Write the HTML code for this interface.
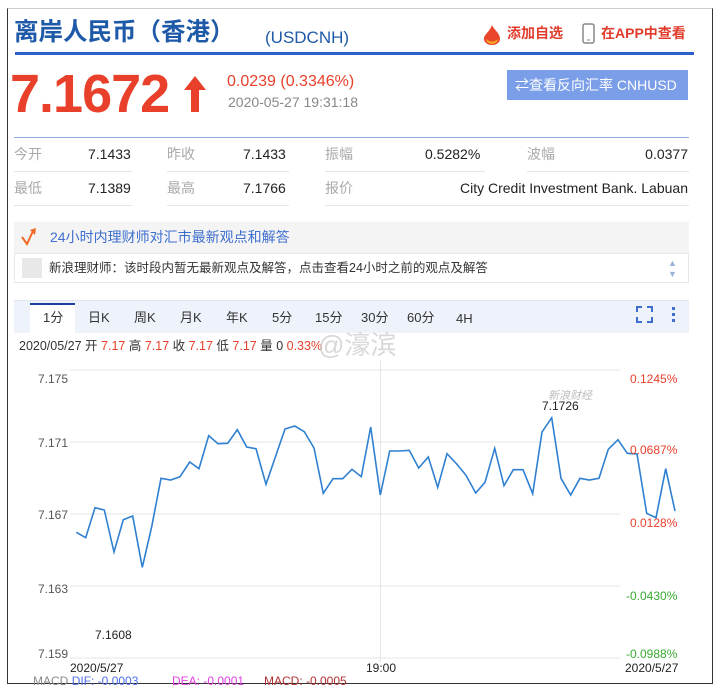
<!DOCTYPE html>
<html><head><meta charset="utf-8"><style>
*{margin:0;padding:0;box-sizing:border-box}
body{width:720px;height:694px;background:#fff;position:relative;overflow:hidden;font-family:"Liberation Sans","Noto Sans CJK SC",sans-serif}
.a{position:absolute;white-space:nowrap;line-height:1.2}
.t{top:310px;font-size:13px;color:#333;line-height:16px;height:16px}
</style></head><body>
<div class="a" style="left:7px;top:8px;width:706px;height:676px;border:1px solid #333;border-top-color:#ccc"></div>
<div class="a" style="left:14px;top:18px;font-size:24.5px;color:#1e5aa8;font-weight:bold">离岸人民币（香港）</div>
<div class="a" style="left:265px;top:28px;font-size:17px;color:#1e5aa8">(USDCNH)</div>
<svg class="a" style="left:481px;top:24px" width="22" height="22" viewBox="0 0 22 22"><path d="M11 1C13 6 19 9 19 15A8 6 0 0 1 3 15C3 10 8 9 11 1Z" fill="#e8452c"/><path d="M5 15A6 5 0 0 0 17 15Q11 20 5 15Z" fill="#f5a623"/></svg>
<div class="a" style="left:507px;top:25px;font-size:14px;color:#e13b2c;font-weight:bold">添加自选</div>
<svg class="a" style="left:582px;top:23px" width="14" height="22"><rect x="1" y="1" width="11" height="19" rx="2" fill="none" stroke="#888" stroke-width="1.5"/><line x1="5" y1="17" x2="8" y2="17" stroke="#888"/></svg>
<div class="a" style="left:601px;top:25px;font-size:14px;color:#e13b2c;font-weight:bold">在APP中查看</div>
<div class="a" style="left:15px;top:52px;width:679px;height:3px;background:#2f5fc8"></div>
<div class="a" style="left:10px;top:62px;font-size:54px;font-weight:bold;color:#e8402b;letter-spacing:-1px">7.1672</div>
<svg class="a" style="left:180px;top:74px" width="30" height="40"><path d="M15 2L4 16H11V38H19V16H26Z" fill="#e8402b"/></svg>
<div class="a" style="left:227px;top:72px;font-size:16px;color:#e8402b">0.0239 (0.3346%)</div>
<div class="a" style="left:228px;top:94px;font-size:14px;color:#888">2020-05-27 19:31:18</div>
<div class="a" style="left:507px;top:70px;width:181px;height:30px;background:#7b9ee8"></div>
<div class="a" style="left:515px;top:77px;font-size:14px;color:#fff">⇄查看反向汇率 CNHUSD</div>
<div class="a" style="left:14px;top:137px;width:675px;height:1px;background:#8fb0e0"></div>
<div class="a" style="font-size:14px;color:#aaa;left:14px;top:146px">今开</div>
<div class="a" style="font-size:14px;color:#222;left:88px;top:146px">7.1433</div>
<div class="a" style="font-size:14px;color:#aaa;left:167px;top:146px">昨收</div>
<div class="a" style="font-size:14px;color:#222;left:243px;top:146px">7.1433</div>
<div class="a" style="font-size:14px;color:#aaa;left:325px;top:146px">振幅</div>
<div class="a" style="font-size:14px;color:#222;left:425px;top:146px">0.5282%</div>
<div class="a" style="font-size:14px;color:#aaa;left:527px;top:146px">波幅</div>
<div class="a" style="font-size:14px;color:#222;right:32px;top:146px">0.0377</div>
<div class="a" style="font-size:14px;color:#aaa;left:14px;top:180px">最低</div>
<div class="a" style="font-size:14px;color:#222;left:88px;top:180px">7.1389</div>
<div class="a" style="font-size:14px;color:#aaa;left:167px;top:180px">最高</div>
<div class="a" style="font-size:14px;color:#222;left:243px;top:180px">7.1766</div>
<div class="a" style="font-size:14px;color:#aaa;left:325px;top:180px">报价</div>
<div class="a" style="font-size:14px;color:#222;right:32px;top:180px">City Credit Investment Bank. Labuan</div>
<div class="a" style="left:14px;top:171px;width:118px;height:1px;background:#e6e6e6"></div>
<div class="a" style="left:167px;top:171px;width:122px;height:1px;background:#e6e6e6"></div>
<div class="a" style="left:325px;top:171px;width:160px;height:1px;background:#e6e6e6"></div>
<div class="a" style="left:527px;top:171px;width:162px;height:1px;background:#e6e6e6"></div>
<div class="a" style="left:14px;top:205px;width:118px;height:1px;background:#e6e6e6"></div>
<div class="a" style="left:167px;top:205px;width:122px;height:1px;background:#e6e6e6"></div>
<div class="a" style="left:325px;top:205px;width:364px;height:1px;background:#e6e6e6"></div>
<div class="a" style="left:14px;top:222px;width:675px;height:31px;background:#f4f4f4"></div>
<svg class="a" style="left:20px;top:227px" width="22" height="20"><path d="M2 10L7 17L13 4" fill="none" stroke="#f06a25" stroke-width="2"/><path d="M10 3L16 1L15 8Z" fill="#f06a25"/></svg>
<div class="a" style="left:50px;top:229px;font-size:14px;color:#3d6ed0">24小时内理财师对汇市最新观点和解答</div>
<div class="a" style="left:14px;top:253px;width:675px;height:30px;border:1px solid #e8e8e8;background:#fff"></div>
<div class="a" style="left:22px;top:258px;width:20px;height:20px;background:#e8e8e8"></div>
<div class="a" style="left:49px;top:261px;font-size:12.5px;color:#333">新浪理财师：该时段内暂无最新观点及解答，点击查看24小时之前的观点及解答</div>
<div class="a" style="left:668px;top:258px;font-size:9px;color:#9bb0d8;line-height:11px">▲<br>▼</div>
<div class="a" style="left:14px;top:300px;width:675px;height:33px;background:#edf2fb;border-top:1px solid #dde5f5"></div>
<div class="a" style="left:30px;top:303px;width:45px;height:31px;background:#fff;border-top:2px solid #1e3f9c"></div>
<div class="a t" style="left:43px">1分</div>
<div class="a t" style="left:88px">日K</div>
<div class="a t" style="left:134px">周K</div>
<div class="a t" style="left:180px">月K</div>
<div class="a t" style="left:226px">年K</div>
<div class="a t" style="left:272px">5分</div>
<div class="a t" style="left:315px">15分</div>
<div class="a t" style="left:361px">30分</div>
<div class="a t" style="left:407px">60分</div>
<div class="a t" style="left:456px;top:311px">4H</div>
<svg class="a" style="left:635px;top:305px" width="50" height="20"><path d="M1 6V1H6M11 1H16V6M16 11V16H11M6 16H1V11" fill="none" stroke="#3d6ed0" stroke-width="2" transform="translate(1,1)"/><rect x="37" y="2" width="3" height="3" fill="#3d6ed0"/><rect x="37" y="8" width="3" height="3" fill="#3d6ed0"/><rect x="37" y="14" width="3" height="3" fill="#3d6ed0"/></svg>
<div class="a" style="left:19px;top:339px;font-size:12.5px;color:#333">2020/05/27 开 <span style="color:#e8402b">7.17</span> 高 <span style="color:#e8402b">7.17</span> 收 <span style="color:#e8402b">7.17</span> 低 <span style="color:#e8402b">7.17</span> 量 0 <span style="color:#e8402b">0.33%</span></div>
<div class="a" style="left:318px;top:330px;font-size:26px;color:rgba(200,200,200,.7)">@濠滨</div>
<svg class="a" style="left:0;top:360px" width="720" height="334">
<g stroke="#e6e6e6" stroke-width="1">
<line x1="70" y1="10" x2="620" y2="10"/><line x1="70" y1="82" x2="620" y2="82"/><line x1="70" y1="154" x2="620" y2="154"/><line x1="70" y1="226" x2="620" y2="226"/><line x1="70" y1="298" x2="620" y2="298"/><line x1="380.5" y1="0" x2="380.5" y2="302"/>
</g>
<polyline transform="translate(0,-360)" fill="none" stroke="#2f80d0" stroke-width="1.6" points="76.3,532.3 85.7,537.7 95,507.7 104.3,510 114,552 123.3,519.7 132.7,516 142.3,567.3 151.7,526.7 161,478.3 170.7,480 180,476.7 189.7,462 199,468.7 208.7,435.7 218,443.7 227.7,443.3 237.3,429.7 246.7,447 256,448.7 266,484.3 275.7,456 285,429 294.7,426 304.3,431.7 314,448 323.3,493.3 333,478.7 342.7,478.7 352,469.3 361.3,476.7 370.7,427 380.3,495 389.7,451 400,451 409.3,450.3 418.7,468 428.3,457 437.7,487.3 447,453.7 456.7,464 466,475.3 475.7,493 485,482.3 494.7,448.3 504,485.7 513.3,469.7 523,469.7 532.7,493.7 542,432 551.7,417.7 561,478.3 570.7,495 580,478.3 589.3,480 599,478.3 608.3,449.3 618,439.7 627.3,453.3 637,454 646.7,513.3 656,517.7 665.7,468.7 675,511"/>
</svg>
<div class="a" style="font-size:12px;color:#555;left:38px;top:372px">7.175</div>
<div class="a" style="font-size:12px;color:#555;left:38px;top:436px">7.171</div>
<div class="a" style="font-size:12px;color:#555;left:38px;top:508px">7.167</div>
<div class="a" style="font-size:12px;color:#555;left:38px;top:582px">7.163</div>
<div class="a" style="font-size:12px;color:#555;left:38px;top:647px">7.159</div>
<div class="a" style="font-size:12px;color:#e8402b;left:630px;top:372px">0.1245%</div>
<div class="a" style="font-size:12px;color:#e8402b;left:630px;top:443px">0.0687%</div>
<div class="a" style="font-size:12px;color:#e8402b;left:630px;top:516px">0.0128%</div>
<div class="a" style="font-size:12px;color:#3aa832;left:626px;top:589px">-0.0430%</div>
<div class="a" style="font-size:12px;color:#3aa832;left:626px;top:647px">-0.0988%</div>
<div class="a" style="font-size:12px;color:#222;left:542px;top:399px">7.1726</div>
<div class="a" style="font-size:11px;color:#bbb;left:548px;top:390px;font-style:italic">新浪财经</div>
<div class="a" style="font-size:12px;color:#222;left:95px;top:628px">7.1608</div>
<div class="a" style="font-size:12px;color:#222;left:70px;top:661px">2020/5/27</div>
<div class="a" style="font-size:12px;color:#222;left:366px;top:661px">19:00</div>
<div class="a" style="font-size:12px;color:#222;left:625px;top:661px">2020/5/27</div>
<div class="a" style="font-size:12px;left:33px;top:674px"><span style="color:#888">MACD</span> <span style="color:#4f6ff0">DIF: -0.0003</span></div>
<div class="a" style="font-size:12px;color:#e040e0;left:172px;top:674px">DEA: -0.0001</div>
<div class="a" style="font-size:12px;color:#b03030;left:264px;top:674px">MACD: -0.0005</div>
</body></html>
